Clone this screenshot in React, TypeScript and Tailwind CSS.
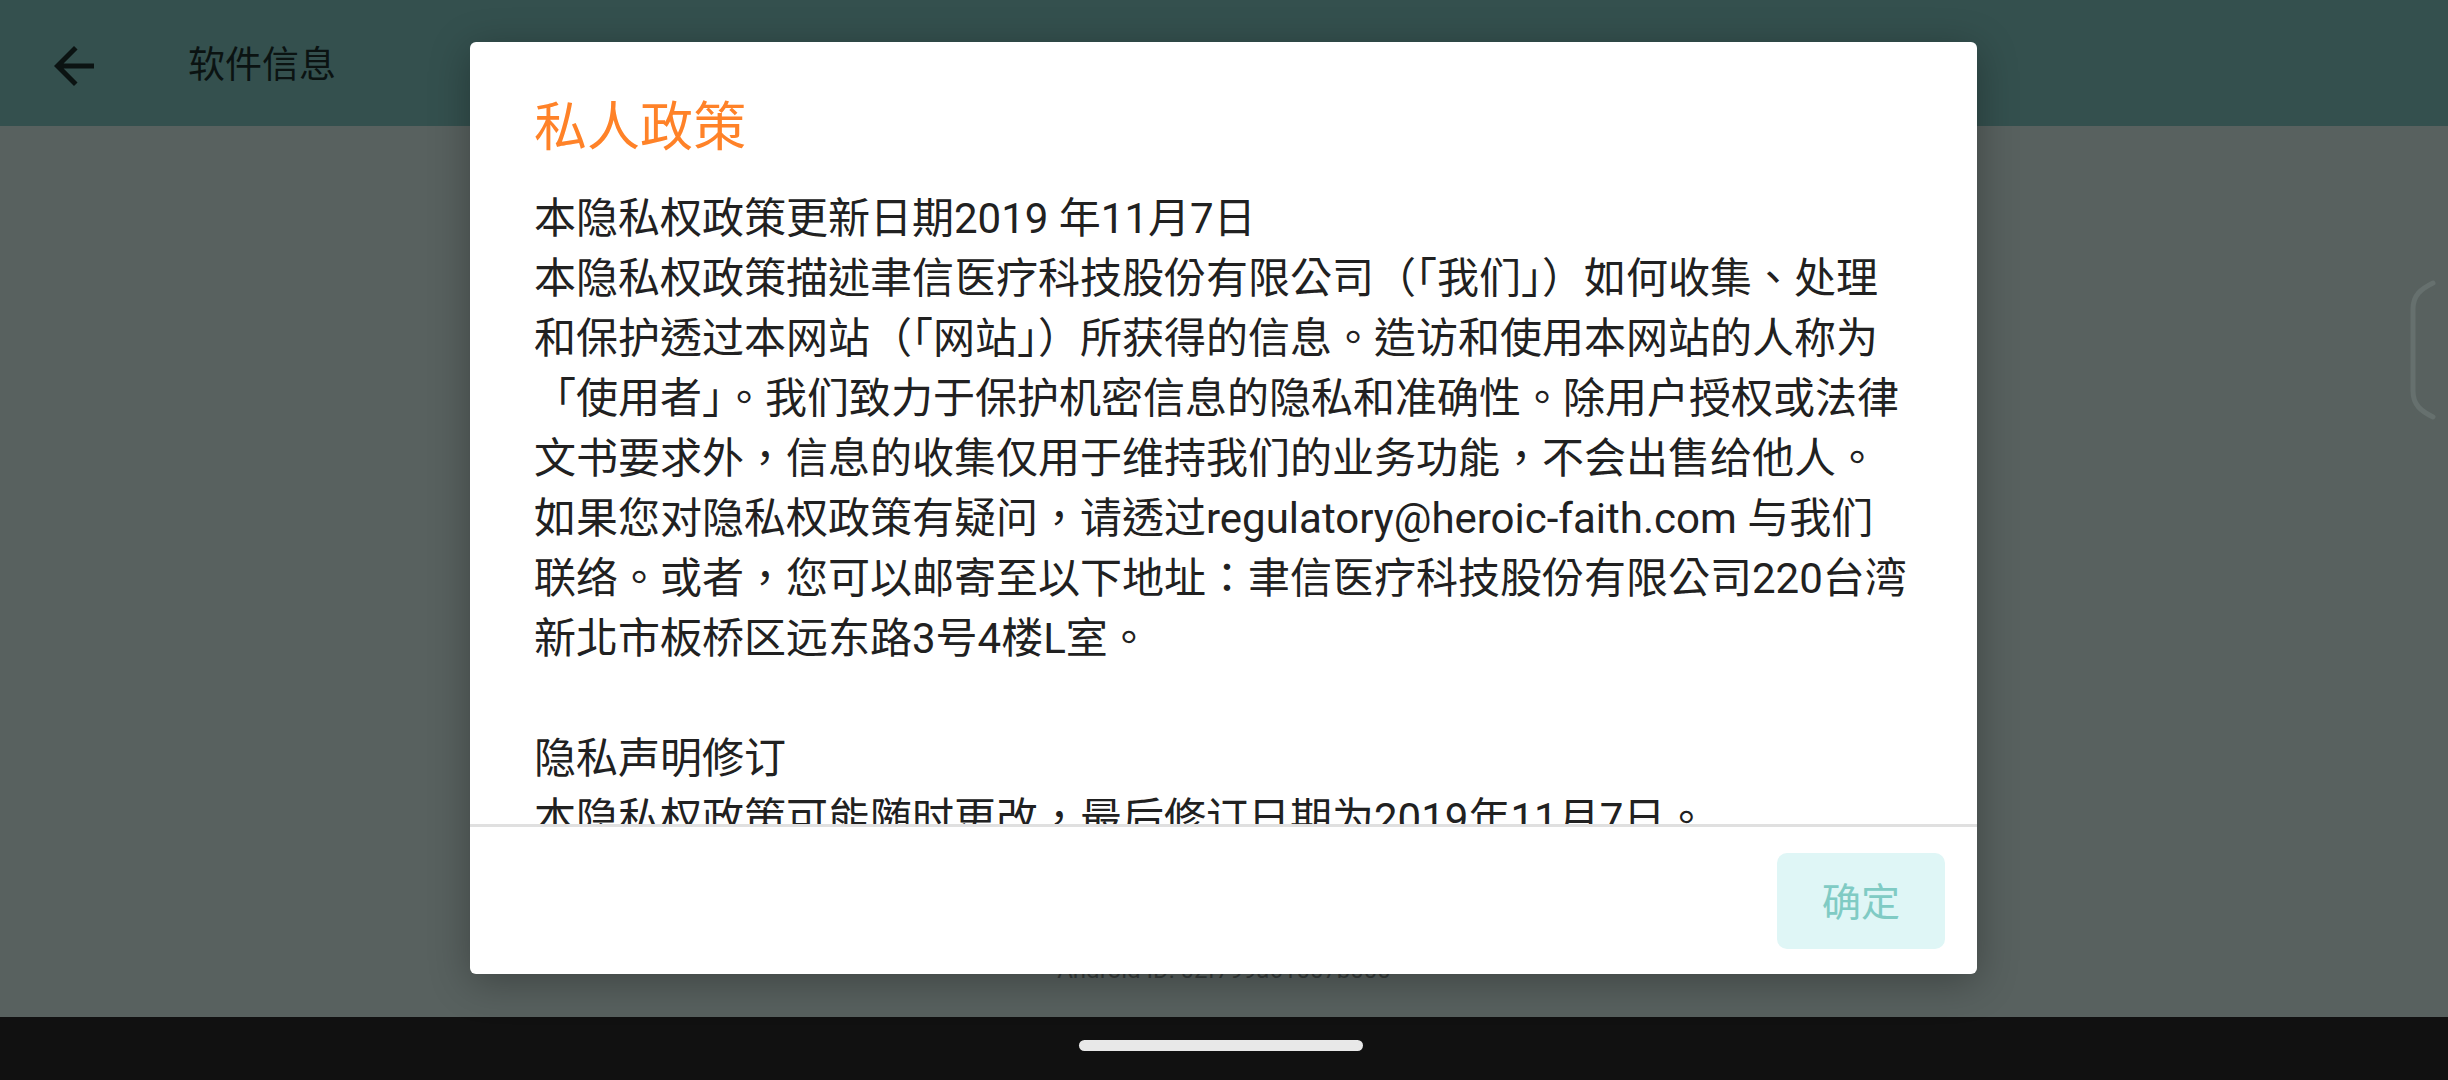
import React from "react";

const lines: string[] = [
  "本隐私权政策更新日期2019 年11月7日",
  "本隐私权政策描述聿信医疗科技股份有限公司（「我们」）如何收集、处理",
  "和保护透过本网站（「网站」）所获得的信息。造访和使用本网站的人称为",
  "「使用者」。我们致力于保护机密信息的隐私和准确性。除用户授权或法律",
  "文书要求外，信息的收集仅用于维持我们的业务功能，不会出售给他人。",
  "如果您对隐私权政策有疑问，请透过regulatory@heroic-faith.com 与我们",
  "联络。或者，您可以邮寄至以下地址：聿信医疗科技股份有限公司220台湾",
  "新北市板桥区远东路3号4楼L室。",
];

const lines2: string[] = [
  "隐私声明修订",
  "本隐私权政策可能随时更改，最后修订日期为2019年11月7日。",
];

export default function App() {
  return (
    <div className="relative w-[2448px] h-[1080px] overflow-hidden bg-[#58615f] font-['Roboto','Noto_Sans_CJK_TC',sans-serif]">
      <div className="flex flex-col h-full">
        <header className="h-[126px] bg-[#34504e] flex items-center shrink-0 pt-[5px]">
          <svg className="ml-[44px] w-[60px] h-[60px]" viewBox="0 0 24 24">
            <path
              d="M20 11H7.83l5.59-5.59L12 4l-8 8 8 8 1.41-1.41L7.83 13H20v-2z"
              fill="#0b1312"
            />
          </svg>
          <span className="ml-[84px] text-[37px] text-[#0b1312]">软件信息</span>
        </header>
        <main className="flex-1 flex flex-col justify-end items-center pb-[33px]">
          <div className="text-[24px] leading-[28px] text-[#353b3a]">Android ID: 02f799a61007b000</div>
        </main>
        <footer className="h-[63px] bg-[#111111] flex justify-center items-start pt-[23px] pr-[6px] shrink-0">
          <div className="w-[284px] h-[11px] rounded-full bg-[#e8e8e8]" />
        </footer>
      </div>

      <svg className="absolute left-[2405px] top-[275px] w-[36px] h-[150px]" viewBox="0 0 36 150">
        <path
          d="M28 8 C16 14 8 20 8 34 L8 116 C8 130 16 136 28 142"
          fill="none"
          stroke="#66706e"
          strokeWidth="5"
          strokeLinecap="round"
        />
      </svg>

      <div className="absolute left-[470px] top-[42px] w-[1507px] h-[932px] bg-white rounded-[6px] shadow-[0_8px_40px_rgba(0,0,0,0.3)] flex flex-col overflow-hidden">
        <div className="flex-1 overflow-hidden px-[64px] pt-[54px]">
          <div className="text-[53px] leading-[64px] text-[#ff8228]">私人政策</div>
          <div className="mt-[29px] text-[42px] leading-[60px] text-[#212121]">
            {lines.map((l, i) => (
              <div key={i} className="whitespace-nowrap">{l}</div>
            ))}
            <div className="h-[60px]" />
            {lines2.map((l, i) => (
              <div key={i} className="whitespace-nowrap">{l}</div>
            ))}
          </div>
        </div>
        <div className="h-[3px] bg-[#e0e0e0] shrink-0" />
        <div className="h-[147px] shrink-0 flex items-center justify-end pr-[32px]">
          <button className="w-[168px] h-[96px] rounded-[10px] bg-[#dff6f6] text-[39px] text-[#80cbc4] flex items-center justify-center pt-[5px]">
            确定
          </button>
        </div>
      </div>
    </div>
  );
}
